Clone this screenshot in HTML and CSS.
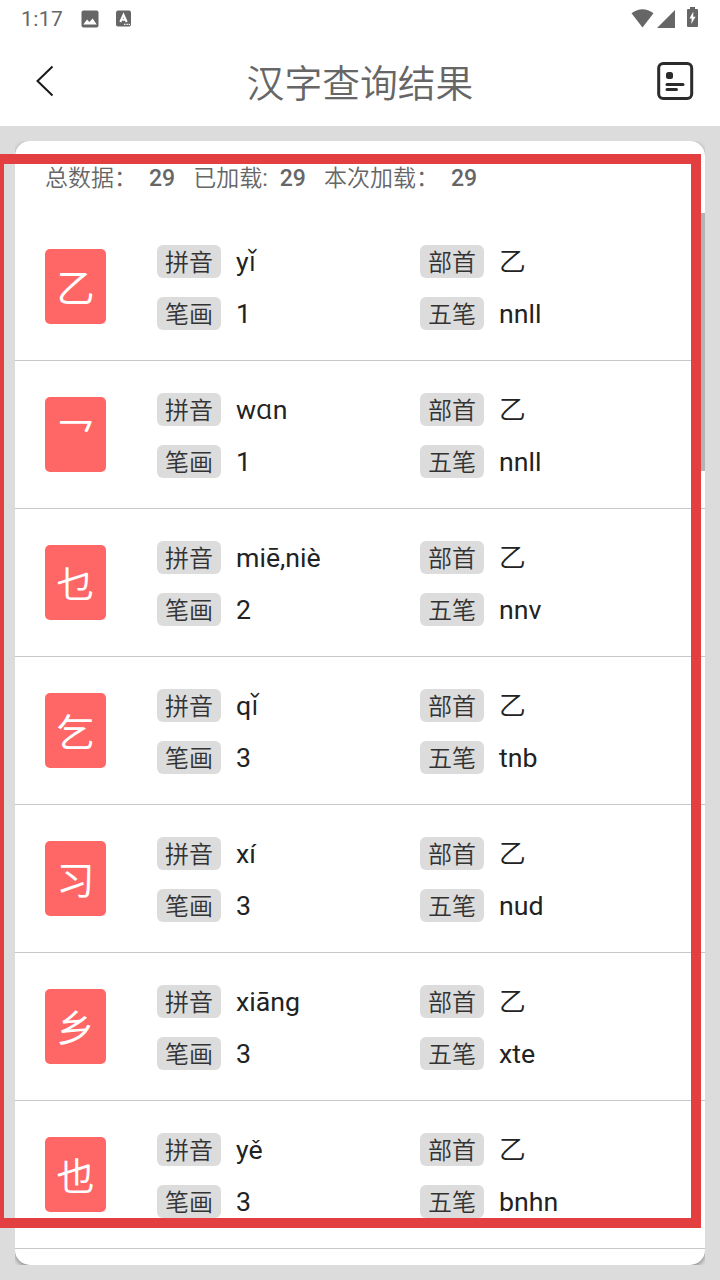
FILE: index.html
```html
<!DOCTYPE html>
<html lang="zh-CN">
<head>
    <meta charset="UTF-8">
    <meta name="viewport" content="width=device-width, initial-scale=1.0">
    <title>汉字查询结果</title>
    <link rel="stylesheet" href="styles.css">
</head>
<body>
    <div class="status-bar">
        <span class="time">1:17</span>
        <svg class="icon-image" width="18" height="18" viewBox="0 0 18 18">
            <rect x="0.5" y="0.5" width="17" height="17" rx="2" fill="#666"/>
            <path d="M2.3 14.4L6 9.5l2.4 2.6L11.7 8.4l4 6z" fill="#fff"/>
        </svg>
        <svg class="icon-a" width="15" height="17" viewBox="0 0 15 17">
            <rect x="0" y="0.5" width="15" height="16" rx="2" fill="#666"/>
            <path d="M4.3 12L7.5 4.8 10.7 12M5.4 9.8h4.2" fill="none" stroke="#fff" stroke-width="2"/>
            <path d="M8 14.4h1.4M10.4 14.4h1.4M12.6 14.4h1.4" stroke="#fff" stroke-width="1.2"/>
        </svg>
        <div class="status-right">
            <svg width="23" height="19" viewBox="0 0 23 19"><path d="M0.5 4.3Q11.5-3.8 22.5 4.3L11.5 18.5z" fill="#666"/></svg>
            <svg class="icon-signal" width="18" height="18" viewBox="0 0 18 18"><path d="M18 0v18H0z" fill="#666"/></svg>
            <svg class="icon-battery" width="11" height="20" viewBox="0 0 11 20">
                <path d="M3 0h5v2h2a1 1 0 0 1 1 1v16a1 1 0 0 1-1 1H1a1 1 0 0 1-1-1V3a1 1 0 0 1 1-1h2z" fill="#666"/>
                <path d="M6.3 4.5L2.5 11.5h2.3L4.2 17 8.6 9.7H6.2z" fill="#fff"/>
            </svg>
        </div>
    </div>
    <div class="header">
        <svg width="20" height="32" viewBox="0 0 20 32"><path d="M17.5 1.5L2.5 16l15 14.5" fill="none" stroke="#1a1a1a" stroke-width="2"/></svg>
        <h1>汉字查询结果</h1>
        <svg width="37" height="38" viewBox="0 0 37 38">
            <rect x="1.7" y="1.5" width="33" height="35" rx="4.5" fill="none" stroke="#2b2b2b" stroke-width="3"/>
            <rect x="9" y="10" width="7" height="7" rx="2.5" fill="#2b2b2b"/>
            <path d="M10 22.5h16M10 27.5h9.5" stroke="#2b2b2b" stroke-width="3" stroke-linecap="round"/>
        </svg>
    </div>
    <div class="content">
        <div class="card-wrap">
            <div class="card">
                <div class="summary">
                    <span>总数据：</span><b>29</b>
                    <span>已加载:</span><b>29</b>
                    <span>本次加载：</span><b>29</b>
                </div>
                <div class="item">
                    <div class="word">乙</div>
                    <div class="info">
                        <span class="tag">拼音</span><span class="value">yǐ</span>
                        <span class="tag">部首</span><span class="value">乙</span>
                        <span class="tag">笔画</span><span class="value">1</span>
                        <span class="tag">五笔</span><span class="value">nnll</span>
                    </div>
                </div>
                <div class="item">
                    <div class="word">乛</div>
                    <div class="info">
                        <span class="tag">拼音</span><span class="value">wɑn</span>
                        <span class="tag">部首</span><span class="value">乙</span>
                        <span class="tag">笔画</span><span class="value">1</span>
                        <span class="tag">五笔</span><span class="value">nnll</span>
                    </div>
                </div>
                <div class="item">
                    <div class="word">乜</div>
                    <div class="info">
                        <span class="tag">拼音</span><span class="value">miē,niè</span>
                        <span class="tag">部首</span><span class="value">乙</span>
                        <span class="tag">笔画</span><span class="value">2</span>
                        <span class="tag">五笔</span><span class="value">nnv</span>
                    </div>
                </div>
                <div class="item">
                    <div class="word">乞</div>
                    <div class="info">
                        <span class="tag">拼音</span><span class="value">qǐ</span>
                        <span class="tag">部首</span><span class="value">乙</span>
                        <span class="tag">笔画</span><span class="value">3</span>
                        <span class="tag">五笔</span><span class="value">tnb</span>
                    </div>
                </div>
                <div class="item">
                    <div class="word">习</div>
                    <div class="info">
                        <span class="tag">拼音</span><span class="value">xí</span>
                        <span class="tag">部首</span><span class="value">乙</span>
                        <span class="tag">笔画</span><span class="value">3</span>
                        <span class="tag">五笔</span><span class="value">nud</span>
                    </div>
                </div>
                <div class="item">
                    <div class="word">乡</div>
                    <div class="info">
                        <span class="tag">拼音</span><span class="value">xiāng</span>
                        <span class="tag">部首</span><span class="value">乙</span>
                        <span class="tag">笔画</span><span class="value">3</span>
                        <span class="tag">五笔</span><span class="value">xte</span>
                    </div>
                </div>
                <div class="item">
                    <div class="word">也</div>
                    <div class="info">
                        <span class="tag">拼音</span><span class="value">yě</span>
                        <span class="tag">部首</span><span class="value">乙</span>
                        <span class="tag">笔画</span><span class="value">3</span>
                        <span class="tag">五笔</span><span class="value">bnhn</span>
                    </div>
                </div>
                <div class="scrollbar"></div>
            </div>
        </div>
    </div>
    <div class="frame"></div>
</body>
</html>
```
FILE: styles.css
```css
* {
    box-sizing: border-box;
}
body {
    margin: 0;
    height: 1280px;
    position: relative;
    overflow: hidden;
    display: flex;
    flex-direction: column;
    background-color: #fff;
    font-family: Roboto, "Noto Sans CJK SC DemiLight", "Noto Sans CJK SC", sans-serif;
}
svg {
    display: block;
    flex: none;
}
.status-bar {
    height: 37px;
    display: flex;
    align-items: center;
    padding: 0 22px 0 21px;
    color: #666;
}
.time {
    font-size: 21px;
    letter-spacing: 0.4px;
    width: 60px;
}
.icon-a {
    margin-left: 17px;
}
.status-right {
    margin-left: auto;
    display: flex;
    align-items: center;
}
.icon-signal {
    margin-left: 3px;
}
.icon-battery {
    margin: 0 0 3px 12px;
}
.header {
    height: 89px;
    display: flex;
    align-items: center;
    justify-content: space-between;
    padding: 0 26px 2px 35px;
}
.header h1 {
    margin: 7px 0 0 8px;
    font-size: 37.8px;
    line-height: 50px;
    font-weight: 400;
    color: #666;
}
.content {
    flex: 1;
    min-height: 0;
    padding: 15px;
    background-color: #dcdcdc;
}
.card-wrap {
    height: 1124px;
    overflow: hidden;
}
.card {
    position: relative;
    height: 1124px;
    overflow: hidden;
    background-color: #fff;
    border-radius: 15px;
    box-shadow: 0 2px 5px rgba(0, 0, 0, 0.4);
}
.summary {
    height: 72px;
    display: flex;
    align-items: center;
    padding: 2px 30px 0;
    font-size: 23px;
    color: #666;
}
.summary span {
    margin-top: -4px;
}
.summary b {
    font-weight: 500;
    margin: 0 18px 0 12px;
}
.item {
    height: 148px;
    display: flex;
    align-items: center;
    padding: 0 30px;
    border-bottom: 1px solid #c8c8c8;
}
.word {
    flex: none;
    width: 61px;
    height: 75px;
    margin-right: 51px;
    border-radius: 5px;
    background-color: #ff6666;
    color: #fff;
    font-family: "Noto Sans CJK SC", sans-serif;
    font-size: 38px;
    line-height: 74px;
    text-align: center;
}
.info {
    flex: 1;
    display: grid;
    grid-template-columns: 64px 199px 64px 1fr;
    row-gap: 19px;
    margin-top: 2px;
}
.tag {
    height: 33px;
    border-radius: 6px;
    background-color: #dcdcdc;
    color: #333;
    font-size: 24px;
    line-height: 37px;
    text-align: center;
}
.value {
    height: 33px;
    padding-left: 15px;
    font-size: 26.7px;
    line-height: 34px;
    color: #222;
}
.scrollbar {
    position: absolute;
    top: 72px;
    right: 0;
    width: 6px;
    height: 258px;
    background-color: #b4b4b4;
}
/* red marker around the result list */
.frame {
    position: absolute;
    left: -6px;
    top: 154px;
    width: 707px;
    height: 1074px;
    border: 10px solid #e33e40;
}
```
